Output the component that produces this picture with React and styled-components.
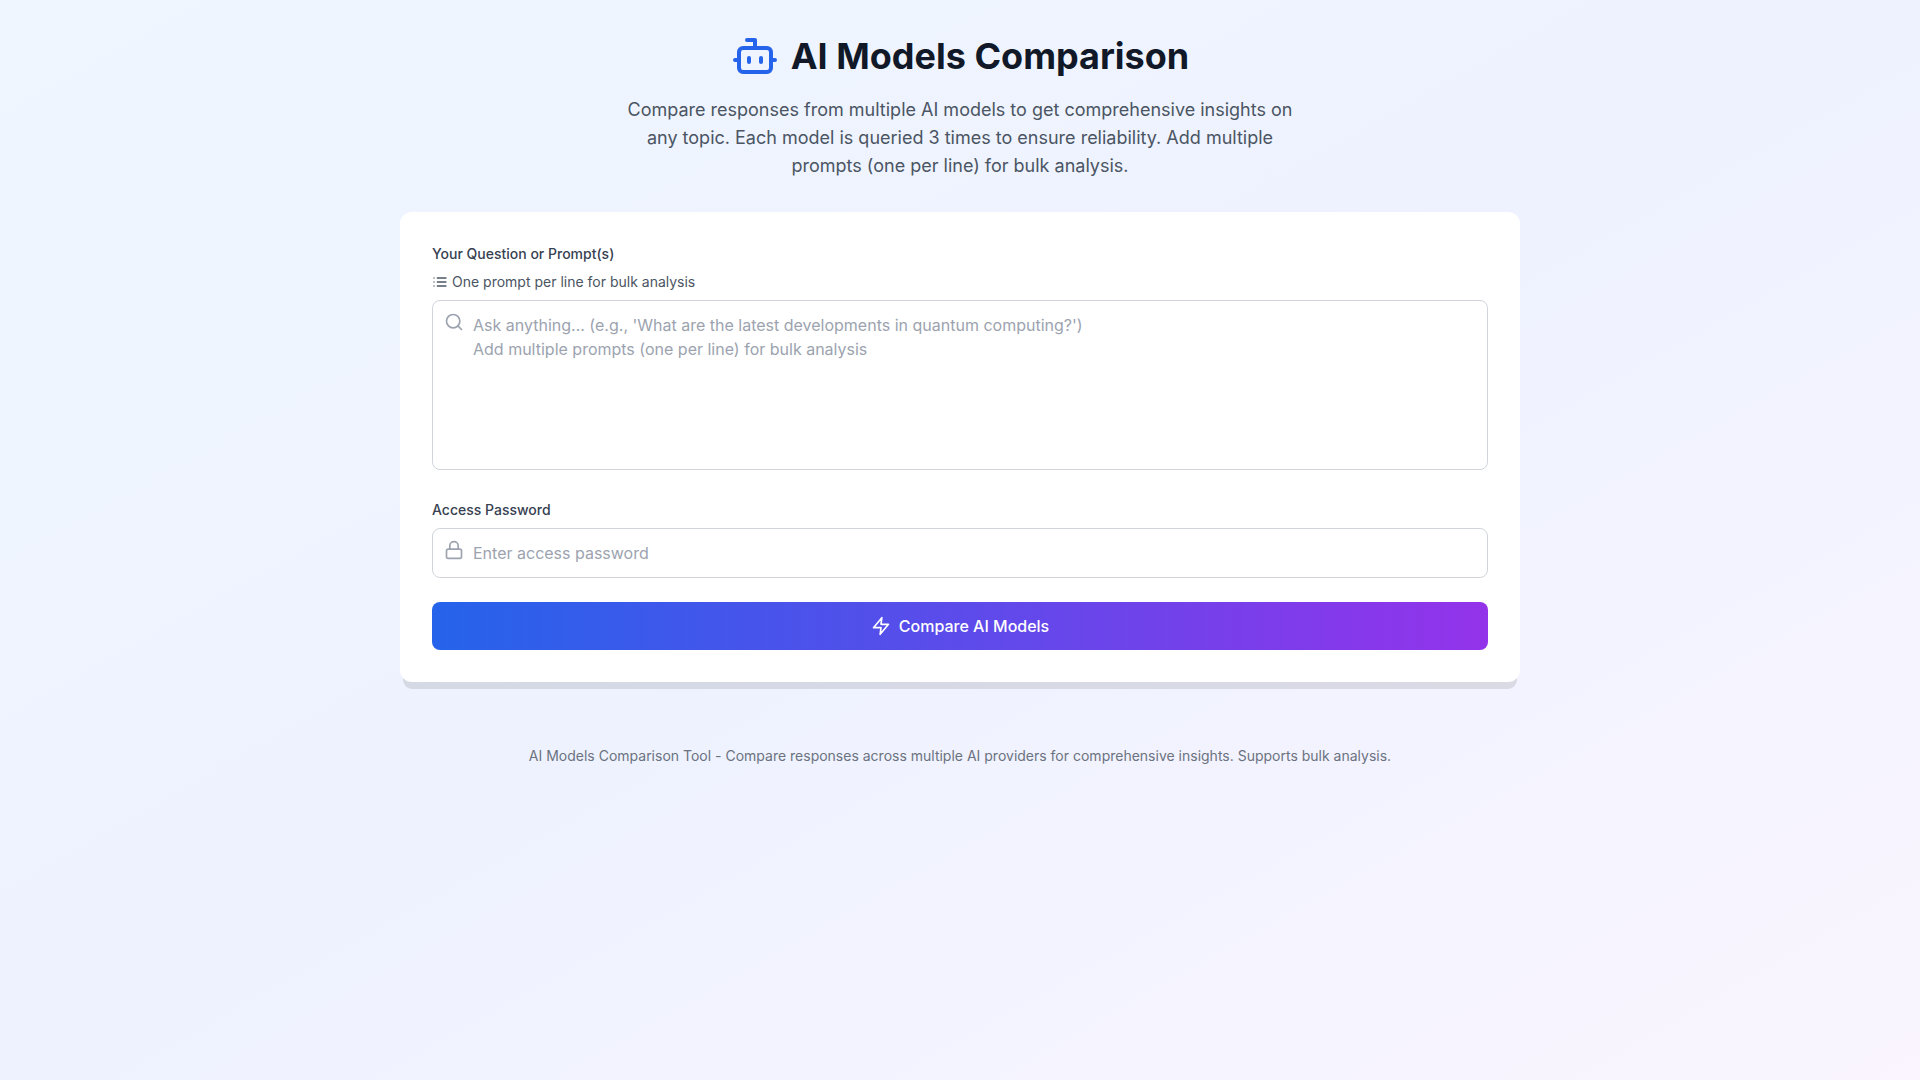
import React from "react";
import styled, { createGlobalStyle } from "styled-components";

const GlobalStyle = createGlobalStyle`
  *, *::before, *::after { box-sizing: border-box; }
  body {
    margin: 0;
    font-family: Inter, "Liberation Sans", sans-serif;
    font-size: 16px;
    line-height: 24px;
    color: #111827;
    text-rendering: optimizeSpeed;
  }
  h1, p { margin: 0; }
  button, input, textarea { font: inherit; text-rendering: inherit; }
`;

const Page = styled.div`
  min-height: 100vh;
  background: linear-gradient(to bottom right, #eff6ff, #eef2ff, #faf5ff);
`;

const Container = styled.div`
  max-width: 1152px;
  margin: 0 auto;
  padding: 32px 16px;
`;

const Header = styled.header`
  text-align: center;
  margin-bottom: 32px;
`;

const TitleRow = styled.div`
  display: flex;
  align-items: center;
  justify-content: center;
  gap: 12px;
  margin-bottom: 16px;
  color: #2563eb;
`;

const Title = styled.h1`
  font-size: 36px;
  line-height: 40px;
  font-weight: 700;
  color: #111827;
`;

const Intro = styled.p`
  max-width: 672px;
  margin: 0 auto;
  font-size: 18px;
  line-height: 28px;
  color: #4b5563;
`;

const Card = styled.form`
  display: flex;
  flex-direction: column;
  gap: 24px;
  padding: 32px;
  border-radius: 12px;
  background: #fff;
  box-shadow: 0 10px 0 -3px rgba(0, 0, 0, 0.1);
`;

const Label = styled.label`
  display: block;
  margin-bottom: 8px;
  font-size: 14px;
  line-height: 20px;
  font-weight: 500;
  color: #374151;
`;

const Hint = styled.div`
  display: flex;
  align-items: center;
  gap: 4px;
  margin-bottom: 8px;
  font-size: 14px;
  line-height: 20px;
  color: #4b5563;
`;

const Field = styled.div`
  position: relative;
`;

const FieldIcon = styled.span`
  position: absolute;
  top: 12px;
  left: 12px;
  display: flex;
  color: #9ca3af;
  pointer-events: none;
`;

const Control = styled.input`
  width: 100%;
  padding: 12px 16px 12px 40px;
  border: 1px solid #d1d5db;
  border-radius: 8px;
  background: #fff;
  color: #111827;
  resize: none;

  &::placeholder { color: #9ca3af; opacity: 1; }
  &:focus { outline: 2px solid #3b82f6; }
`;

const Submit = styled.button`
  display: flex;
  align-items: center;
  justify-content: center;
  gap: 8px;
  padding: 12px 24px;
  border: 0;
  border-radius: 8px;
  background: linear-gradient(to right, #2563eb, #9333ea);
  color: #fff;
  font-weight: 500;
  cursor: pointer;
`;

const Footer = styled.footer`
  margin-top: 64px;
  text-align: center;
  font-size: 14px;
  line-height: 20px;
  color: #6b7280;
`;

function Icon({ size, children }) {
  return (
    <svg
      width={size}
      height={size}
      viewBox="0 0 24 24"
      fill="none"
      stroke="currentColor"
      strokeWidth="2"
      strokeLinecap="round"
      strokeLinejoin="round"
      aria-hidden="true"
    >
      {children}
    </svg>
  );
}

const BotIcon = () => (
  <Icon size={48}>
    <path d="M12 8V4H8" />
    <rect width="16" height="12" x="4" y="8" rx="2" />
    <path d="M2 14h2M20 14h2M15 13v2M9 13v2" />
  </Icon>
);

const ListIcon = () => (
  <Icon size={16}>
    <path d="M8 6h13M8 12h13M8 18h13M3 6h.01M3 12h.01M3 18h.01" />
  </Icon>
);

const SearchIcon = () => (
  <Icon size={20}>
    <circle cx="11" cy="11" r="8" />
    <path d="m21 21-4.3-4.3" />
  </Icon>
);

const LockIcon = () => (
  <Icon size={20}>
    <rect width="18" height="11" x="3" y="11" rx="2" />
    <path d="M7 11V7a5 5 0 0 1 10 0v4" />
  </Icon>
);

const ZapIcon = () => (
  <Icon size={20}>
    <polygon points="13 2 3 14 12 14 11 22 21 10 12 10 13 2" />
  </Icon>
);

export default function App() {
  return (
    <Page>
      <GlobalStyle />
      <Container>
        <Header>
          <TitleRow>
            <BotIcon />
            <Title>AI Models Comparison</Title>
          </TitleRow>
          <Intro>
            Compare responses from multiple AI models to get comprehensive
            insights on any topic. Each model is queried 3 times to ensure
            reliability. Add multiple prompts (one per line) for bulk analysis.
          </Intro>
        </Header>

        <Card onSubmit={(event) => event.preventDefault()}>
          <div>
            <Label htmlFor="prompt">Your Question or Prompt(s)</Label>
            <Hint>
              <ListIcon />
              <span>One prompt per line for bulk analysis</span>
            </Hint>
            <Field>
              <FieldIcon><SearchIcon /></FieldIcon>
              <Control
                as="textarea"
                id="prompt"
                rows={6}
                placeholder={
                  "Ask anything... (e.g., 'What are the latest developments in quantum computing?')\nAdd multiple prompts (one per line) for bulk analysis"
                }
              />
            </Field>
          </div>

          <div>
            <Label htmlFor="password">Access Password</Label>
            <Field>
              <FieldIcon><LockIcon /></FieldIcon>
              <Control
                type="password"
                id="password"
                placeholder="Enter access password"
              />
            </Field>
          </div>

          <Submit type="submit">
            <ZapIcon />
            Compare AI Models
          </Submit>
        </Card>

        <Footer>
          AI Models Comparison Tool - Compare responses across multiple AI
          providers for comprehensive insights. Supports bulk analysis.
        </Footer>
      </Container>
    </Page>
  );
}
